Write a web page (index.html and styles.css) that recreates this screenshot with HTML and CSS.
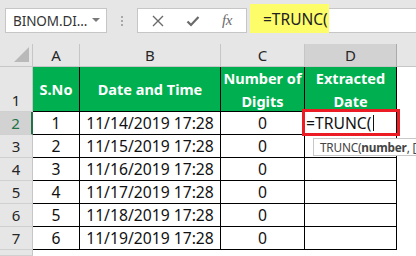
FILE: index.html
```html
<!DOCTYPE html>
<html>
<head>
<meta charset="utf-8">
<link rel="stylesheet" href="styles.css">
</head>
<body>
<div class="toolbar">
  <div class="namebox"><span class="name">BINOM.DI...</span><span class="dd"></span></div>
  <div class="sep"><i></i><i></i><i></i></div>
  <div class="fbuttons">
    <svg class="ico-x" width="12" height="12" viewBox="0 0 12 12"><path d="M1 1L11 11M11 1L1 11" stroke="#6a6a6a" stroke-width="1.4" fill="none"/></svg>
    <svg class="ico-ok" width="14" height="12" viewBox="0 0 14 12"><path d="M1.5 6.5L5 10L12.5 2" stroke="#6a6a6a" stroke-width="2.2" fill="none"/></svg>
    <span class="fx">fx</span>
  </div>
  <div class="finput"><span class="fhl">=TRUNC(</span></div>
</div>
<div class="sheet">
  <div class="corner"><span class="tri"></span></div>
  <div class="colh">A</div>
  <div class="colh">B</div>
  <div class="colh">C</div>
  <div class="colh sel">D</div>
  <div class="colh rest"></div>

  <div class="rowh r1">1</div>
  <div class="th">S.No</div>
  <div class="th">Date and Time</div>
  <div class="th">Number of<br>Digits</div>
  <div class="th">Extracted<br>Date</div>
  <div class="blank"></div>

  <div class="rowh sel">2</div>
  <div class="td">1</div>
  <div class="td">11/14/2019 17:28</div>
  <div class="td">0</div>
  <div class="td active"><span class="entry">=TRUNC(</span><span class="cursor"></span><div class="selbox"></div><div class="tip">TRUNC(<b>number</b>, [</div></div>
  <div class="blank"></div>

  <div class="rowh">3</div>
  <div class="td">2</div>
  <div class="td">11/15/2019 17:28</div>
  <div class="td">0</div>
  <div class="td"></div>
  <div class="blank"></div>

  <div class="rowh">4</div>
  <div class="td">3</div>
  <div class="td">11/16/2019 17:28</div>
  <div class="td">0</div>
  <div class="td"></div>
  <div class="blank"></div>

  <div class="rowh">5</div>
  <div class="td">4</div>
  <div class="td">11/17/2019 17:28</div>
  <div class="td">0</div>
  <div class="td"></div>
  <div class="blank"></div>

  <div class="rowh">6</div>
  <div class="td">5</div>
  <div class="td">11/18/2019 17:28</div>
  <div class="td">0</div>
  <div class="td"></div>
  <div class="blank"></div>

  <div class="rowh">7</div>
  <div class="td">6</div>
  <div class="td">11/19/2019 17:28</div>
  <div class="td">0</div>
  <div class="td"></div>
  <div class="blank"></div>

  <div class="rowh"></div>
  <div class="blank"></div>
  <div class="blank"></div>
  <div class="blank"></div>
  <div class="blank"></div>
  <div class="blank"></div>
</div>
</body>
</html>
```
FILE: styles.css
```css
* { box-sizing: border-box; }
html, body {
  margin: 0;
  padding: 0;
  width: 416px;
  height: 256px;
  overflow: hidden;
  background: #fff;
  font-family: "Noto Sans", "Open Sans", sans-serif;
}
.toolbar {
  height: 44px;
  background: #e6e6e6;
  display: flex;
  align-items: flex-start;
  padding-top: 8px;
  padding-left: 5px;
  overflow: hidden;
}
.namebox {
  width: 102px;
  height: 25px;
  background: #fff;
  border: 1px solid #c6c6c6;
  display: flex;
  align-items: center;
  padding-left: 7px;
  padding-right: 6px;
  justify-content: space-between;
}
.name {
  font-size: 13.5px;
  color: #333;
  letter-spacing: -0.1px;
}
.dd {
  width: 0;
  height: 0;
  border-left: 4px solid transparent;
  border-right: 4px solid transparent;
  border-top: 4px solid #7a7a7a;
  margin-top: -2px;
}
.sep {
  width: 30px;
  height: 25px;
  display: flex;
  flex-direction: column;
  align-items: center;
  justify-content: center;
  gap: 2px;
}
.sep i {
  display: block;
  width: 2px;
  height: 2px;
  background: #a8a8a8;
}
.fbuttons {
  width: 110px;
  height: 25px;
  background: #fff;
  border: 1px solid #c6c6c6;
  display: flex;
  align-items: center;
  padding-left: 14px;
}
.ico-x { margin-right: 22px; }
.ico-ok { margin-right: 22px; }
.fx {
  font-family: "Liberation Serif", "DejaVu Serif", serif;
  font-style: italic;
  font-size: 15px;
  color: #6a6a6a;
  letter-spacing: -0.5px;
}
.finput {
  flex: 1;
  height: 25px;
  margin-left: 3px;
  background: #fff;
  border: 1px solid #c6c6c6;
  border-right: none;
  position: relative;
}
.fhl {
  display: block;
  width: 79px;
  height: 29px;
  margin-top: -5px;
  margin-left: -1px;
  background: #fdfd6a;
  color: #222;
  font-size: 15.5px;
  padding-left: 13px;
  line-height: 30px;
}
.sheet {
  display: grid;
  grid-template-columns: 33px 47px 141px 84px 92px 1fr;
  grid-template-rows: 23px 45px repeat(6, 23px) 1fr;
  height: 212px;
}
.corner {
  background: #e6e6e6;
  border-right: 1px solid #c6c6c6;
  border-bottom: 1px solid #c6c6c6;
  position: relative;
}
.tri {
  position: absolute;
  right: 3px;
  bottom: 4px;
  width: 0;
  height: 0;
  border-left: 15px solid transparent;
  border-bottom: 15px solid #b9b9b9;
}
.colh {
  background: #e6e6e6;
  border-right: 1px solid #c6c6c6;
  border-bottom: 1px solid #c6c6c6;
  display: flex;
  align-items: center;
  justify-content: center;
  font-size: 15px;
  color: #262626;
}
.colh.sel { background: #d2d2d2; border-right-color: #ababab; }
.colh.rest { border-right: none; }
.rowh {
  background: #e6e6e6;
  border-right: 1px solid #c6c6c6;
  border-bottom: 1px solid #d0d0d0;
  display: flex;
  align-items: center;
  justify-content: center;
  font-size: 15px;
  color: #262626;
}
.rowh.r1 { align-items: flex-end; padding-bottom: 1px; }
.rowh.sel {
  background: #d2d2d2;
  color: #217346;
  border-right: 2px solid #217346;
}
.th {
  background: #00b050;
  color: #fff;
  font-weight: bold;
  font-size: 14.5px;
  line-height: 23px;
  text-align: center;
  display: flex;
  align-items: center;
  justify-content: center;
  border-right: 1px solid #000;
  border-bottom: 1px solid #000;
  padding-top: 1px;
}
.td {
  border-right: 1px solid #000;
  border-bottom: 1px solid #000;
  display: flex;
  align-items: center;
  justify-content: center;
  font-size: 15.7px;
  color: #111;
}
.blank { background: #fff; }
.td.active {
  justify-content: flex-start;
  padding-left: 1px;
  position: relative;
  overflow: visible;
}
.entry { color: #111; }
.cursor {
  display: inline-block;
  width: 1px;
  height: 16px;
  background: #111;
  margin-left: 2px;
}
.selbox {
  position: absolute;
  left: -3px;
  top: -3px;
  right: -4px;
  bottom: -2px;
  border: 3px solid #ec1c24;
}
.tip {
  position: absolute;
  left: 8px;
  top: 26px;
  height: 18px;
  background: #fff;
  border: 1px solid #c8c8c8;
  padding-left: 6px;
  padding-right: 10px;
  font-size: 11.8px;
  line-height: 16px;
  color: #444;
  white-space: nowrap;
  letter-spacing: -0.2px;
  z-index: 5;
}
.tip b { color: #444; }
```
